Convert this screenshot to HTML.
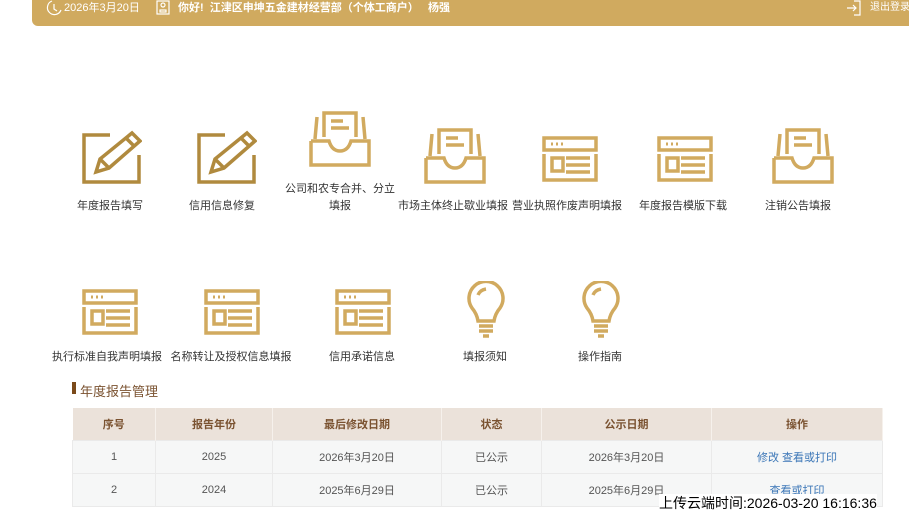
<!DOCTYPE html>
<html><head><meta charset="utf-8"><style>
*{margin:0;padding:0;box-sizing:border-box}
body{width:909px;height:517px;background:#fff;font-family:"Liberation Sans","Noto Sans CJK SC",sans-serif;position:relative;overflow:hidden;color:#333}
.hdr{position:absolute;left:32px;top:0;width:890px;height:26px;background:#d0aa5f;border-radius:0 0 0 6px;color:#fff;font-size:11px}
.hdr span{position:absolute;top:1px;line-height:14px}
.it{position:absolute;width:130px;text-align:center;font-size:11px;color:#333;line-height:17px}
svg{position:absolute;fill:none;stroke:#d1aa5f;stroke-width:3.5}
.dk{stroke:#b08a3e}
table{position:absolute;left:72px;top:408px;width:811px;border-collapse:collapse;font-size:11px;text-align:center}
th{background:#ebe2da;color:#7a5230;height:32px;font-weight:bold;border-right:1px solid #f6f1ec}
td{background:#f6f7f7;height:33px;border:1px solid #eaeaea;color:#555}
a{color:#3b76b7;text-decoration:none}
</style></head><body>
<div class="hdr">
<svg style="left:14px;top:0;stroke:#fff;stroke-width:1.2" width="16" height="16"><path d="M6 1A7 7 0 1 0 15 10M8 4v5l3 2"/></svg>
<span style="left:32px;font-size:11px">2026年3月20日</span>
<svg style="left:124px;top:0;stroke:#fff;stroke-width:1.2" width="14" height="16"><rect x="1" y="1" width="12" height="13"/><rect x="4" y="10" width="6" height="2"/><circle cx="7" cy="5" r="2"/></svg>
<span style="left:146px;font-weight:bold">你好!&nbsp; 江津区申坤五金建材经营部（个体工商户） &nbsp; 杨强</span>
<svg style="left:814px;top:0;stroke:#fff;stroke-width:1.2" width="16" height="16"><path d="M8 1h6v14H8M1 8h9M7 5l3 3-3 3"/></svg>
<span style="left:838px;font-size:10px">退出登录</span>
</div>

<svg class="dk" style="left:82px;top:128px" width="60" height="56"><path d="M28 7H2v47h55V27"/><path d="M14 44l4-13 32-26 8 8-31 27zM14 44l13-4M18 31l9 9M44 10l8 8"/></svg>
<div class="it" style="left:45px;top:198px">年度报告填写</div>
<svg class="dk" style="left:197px;top:128px" width="60" height="56"><path d="M28 7H2v47h55V27"/><path d="M14 44l4-13 32-26 8 8-31 27zM14 44l13-4M18 31l9 9M44 10l8 8"/></svg>
<div class="it" style="left:157px;top:198px">信用信息修复</div>

<!-- trays -->
<svg style="left:309px;top:111px" width="62" height="56"><path d="M2 30v24h58V30H42q-3 10-11 10T20 30H2M6 28l2-22M56 28l-2-22M15 26V2h32v24M22 10h12M22 17h18"/></svg>
<div class="it" style="left:275px;top:181px">公司和农专合并、分立<br>填报</div>
<svg style="left:424px;top:128px" width="62" height="56"><path d="M2 30v24h58V30H42q-3 10-11 10T20 30H2M6 28l2-22M56 28l-2-22M15 26V2h32v24M22 10h12M22 17h18"/></svg>
<div class="it" style="left:388px;top:198px">市场主体终止歇业填报</div>
<svg style="left:772px;top:128px" width="62" height="56"><path d="M2 30v24h58V30H42q-3 10-11 10T20 30H2M6 28l2-22M56 28l-2-22M15 26V2h32v24M22 10h12M22 17h18"/></svg>
<div class="it" style="left:733px;top:198px">注销公告填报</div>

<!-- windows -->
<svg style="left:541px;top:135px" width="58" height="48"><path d="M3 3h52v12H3zM3 19v26h52V19M11 23h11v13H11zM25 23h24M25 30h24M25 37h24"/><path d="M10 9h2M15 9h2M20 9h2" stroke-width="3"/></svg>
<div class="it" style="left:502px;top:198px">营业执照作废声明填报</div>
<svg style="left:656px;top:135px" width="58" height="48"><path d="M3 3h52v12H3zM3 19v26h52V19M11 23h11v13H11zM25 23h24M25 30h24M25 37h24"/><path d="M10 9h2M15 9h2M20 9h2" stroke-width="3"/></svg>
<div class="it" style="left:618px;top:198px">年度报告模版下载</div>
<svg style="left:81px;top:288px" width="58" height="48"><path d="M3 3h52v12H3zM3 19v26h52V19M11 23h11v13H11zM25 23h24M25 30h24M25 37h24"/><path d="M10 9h2M15 9h2M20 9h2" stroke-width="3"/></svg>
<div class="it" style="left:42px;top:349px">执行标准自我声明填报</div>
<svg style="left:203px;top:288px" width="58" height="48"><path d="M3 3h52v12H3zM3 19v26h52V19M11 23h11v13H11zM25 23h24M25 30h24M25 37h24"/><path d="M10 9h2M15 9h2M20 9h2" stroke-width="3"/></svg>
<div class="it" style="left:166px;top:349px">名称转让及授权信息填报</div>
<svg style="left:334px;top:288px" width="58" height="48"><path d="M3 3h52v12H3zM3 19v26h52V19M11 23h11v13H11zM25 23h24M25 30h24M25 37h24"/><path d="M10 9h2M15 9h2M20 9h2" stroke-width="3"/></svg>
<div class="it" style="left:297px;top:349px">信用承诺信息</div>

<!-- bulbs -->
<svg style="left:466px;top:281px" width="40" height="60"><path d="M12 40q-1-7-6-13A17 17 0 1 1 34 27q-5 6-6 13zM13 45h14M13 50h14M17 55h6M12 14q2-5 8-6"/></svg>
<div class="it" style="left:420px;top:349px">填报须知</div>
<svg style="left:581px;top:281px" width="40" height="60"><path d="M12 40q-1-7-6-13A17 17 0 1 1 34 27q-5 6-6 13zM13 45h14M13 50h14M17 55h6M12 14q2-5 8-6"/></svg>
<div class="it" style="left:535px;top:349px">操作指南</div>

<div style="position:absolute;left:72px;top:382px;width:4px;height:12px;background:#7a4a1a"></div>
<div style="position:absolute;left:80px;top:381px;font-size:13px;color:#7a5230">年度报告管理</div>

<table>
<tr><th style="width:83px">序号</th><th style="width:117px">报告年份</th><th style="width:169px">最后修改日期</th><th style="width:100px">状态</th><th style="width:170px">公示日期</th><th>操作</th></tr>
<tr><td>1</td><td>2025</td><td>2026年3月20日</td><td>已公示</td><td>2026年3月20日</td><td><a>修改</a> <a>查看或打印</a></td></tr>
<tr><td>2</td><td>2024</td><td>2025年6月29日</td><td>已公示</td><td>2025年6月29日</td><td><a>查看或打印</a></td></tr>
</table>
<div style="position:absolute;left:659px;top:494px;font-size:14px;color:#000;background:#fff;line-height:18px">上传云端时间:2026-03-20 16:16:36</div>
</body></html>
